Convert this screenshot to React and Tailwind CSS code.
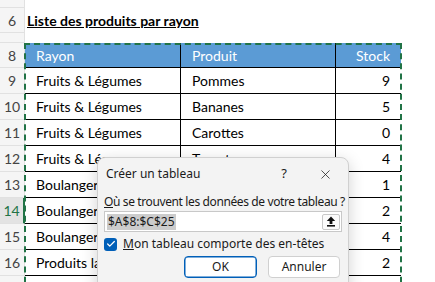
import { Check, X } from "lucide-react";

const rows = [
  { n: 9, a: "Fruits & Légumes", b: "Pommes", c: 9 },
  { n: 10, a: "Fruits & Légumes", b: "Bananes", c: 5 },
  { n: 11, a: "Fruits & Légumes", b: "Carottes", c: 0 },
  { n: 12, a: "Fruits & Légumes", b: "Tomates", c: 4 },
  { n: 13, a: "Boulangerie", b: "Pain", c: 1 },
  { n: 14, a: "Boulangerie", b: "Croissants", c: 2 },
  { n: 15, a: "Boulangerie", b: "Baguettes", c: 4 },
  { n: 16, a: "Produits laitiers", b: "Lait", c: 2 },
  { n: 17, a: "Produits laitiers", b: "Yaourts", c: 6 },
];

function RowHead({ n, h, active }) {
  return (
    <div
      className={`w-[25px] shrink-0 flex items-center justify-center border-r border-b border-[#e1e1e1] text-[14px] ${h} ${
        active ? "bg-[#e3e3e3] text-[#217346] border-r-2 border-r-[#217346]" : "bg-[#f5f5f5] text-[#444]"
      }`}
    >
      {n}
    </div>
  );
}

function Dialog() {
  return (
    <div className="absolute left-[97px] top-[157px] w-[252px] h-[140px] rounded-lg bg-[#f3f3f3] border border-[#d0d0d0] shadow-[0_4px_16px_rgba(0,0,0,0.18)] font-['Noto_Sans',sans-serif] text-[12px] text-[#1a1a1a]">
      <div className="flex items-center h-[30px] pl-[8px] pt-[2px]">
        <span className="flex-1">Créer un tableau</span>
        <span className="w-[20px] text-center text-[13px] mr-[24px]">?</span>
        <X size={15} strokeWidth={1.2} className="mr-[15px]" />
      </div>
      <div className="px-[6px] pt-[6px]">
        <div className="leading-[16px] whitespace-nowrap tracking-[-0.38px]">
          <span className="underline">O</span>ù se trouvent les données de votre tableau ?
        </div>
        <div className="mt-[1px] h-[21px] w-[238px] bg-white border border-[#c8c8c8] flex items-center pl-[2px] pr-[1px]">
          <span className="bg-[#cccccc] px-[1px] leading-[16px] text-[12px]">$A$8:$C$25</span>
          <div className="ml-auto h-[16px] w-[18px] border border-[#c8c8c8] rounded-[2px] flex items-center justify-center bg-[#fbfbfb]">
            <svg width="10" height="11" viewBox="0 0 10 11">
              <path d="M5 0.5 L9.2 5 H6.4 V8 H3.6 V5 H0.8 Z" fill="#111" />
              <rect x="1" y="9" width="8" height="1.6" fill="#111" />
            </svg>
          </div>
        </div>
        <div className="flex items-center mt-[5px] h-[14px]">
          <div className="w-[13px] h-[13px] rounded-[3px] bg-[#005fb8] flex items-center justify-center">
            <Check size={10} strokeWidth={3} color="white" />
          </div>
          <span className="ml-[6px]">
            <span className="underline">M</span>on tableau comporte des en-têtes
          </span>
        </div>
        <div className="flex justify-end gap-[11px] mt-[5px] pr-[2px]">
          <button className="w-[73px] h-[22px] rounded-[4px] bg-white border border-[#005fb8] shadow-[inset_0_0_0_0.5px_#005fb8]">
            OK
          </button>
          <button className="w-[72px] h-[22px] rounded-[4px] bg-white border border-[#d0d0d0]">Annuler</button>
        </div>
      </div>
    </div>
  );
}

export default function App() {
  return (
    <div className="relative w-[435px] h-[282px] overflow-hidden bg-white font-['Lato',sans-serif] text-black">
      <div className="flex h-[8px]">
        <RowHead n="" h="h-[8px]" />
      </div>
      <div className="flex h-[25px]">
        <RowHead n={6} h="h-[25px]" />
        <div className="pl-[2px] flex items-center font-bold underline text-[14px]">Liste des produits par rayon</div>
      </div>
      <div className="flex h-[10px]">
        <RowHead n="" h="h-[10px]" />
      </div>
      <div className="relative">
        <div className="flex h-[25px]">
          <RowHead n={8} h="h-[25px]" />
          <div className="w-[156px] flex items-center pl-[11px] bg-[#5b9bd5] text-white text-[14px] border-r border-black border-b">
            Rayon
          </div>
          <div className="w-[155px] flex items-center pl-[11px] bg-[#5b9bd5] text-white text-[14px] border-r border-black border-b">
            Produit
          </div>
          <div className="w-[65px] flex items-center justify-end pr-[11px] bg-[#5b9bd5] text-white text-[14px] border-b border-black">
            Stock
          </div>
        </div>
        {rows.map((r) => (
          <div key={r.n} className="flex h-[26px]">
            <RowHead n={r.n} h="h-[26px]" active={r.n === 14} />
            <div className="w-[156px] flex items-center pl-[11px] text-[14px] border-r border-b border-black">{r.a}</div>
            <div className="w-[155px] flex items-center pl-[11px] text-[14px] border-r border-b border-black">{r.b}</div>
            <div className="w-[65px] flex items-center justify-end pr-[11px] text-[14px] border-b border-black">{r.c}</div>
          </div>
        ))}
        <div className="absolute left-[24px] top-0 w-[378px] h-[260px] border-2 border-dashed border-[#217346] pointer-events-none" />
      </div>
      <Dialog />
    </div>
  );
}
